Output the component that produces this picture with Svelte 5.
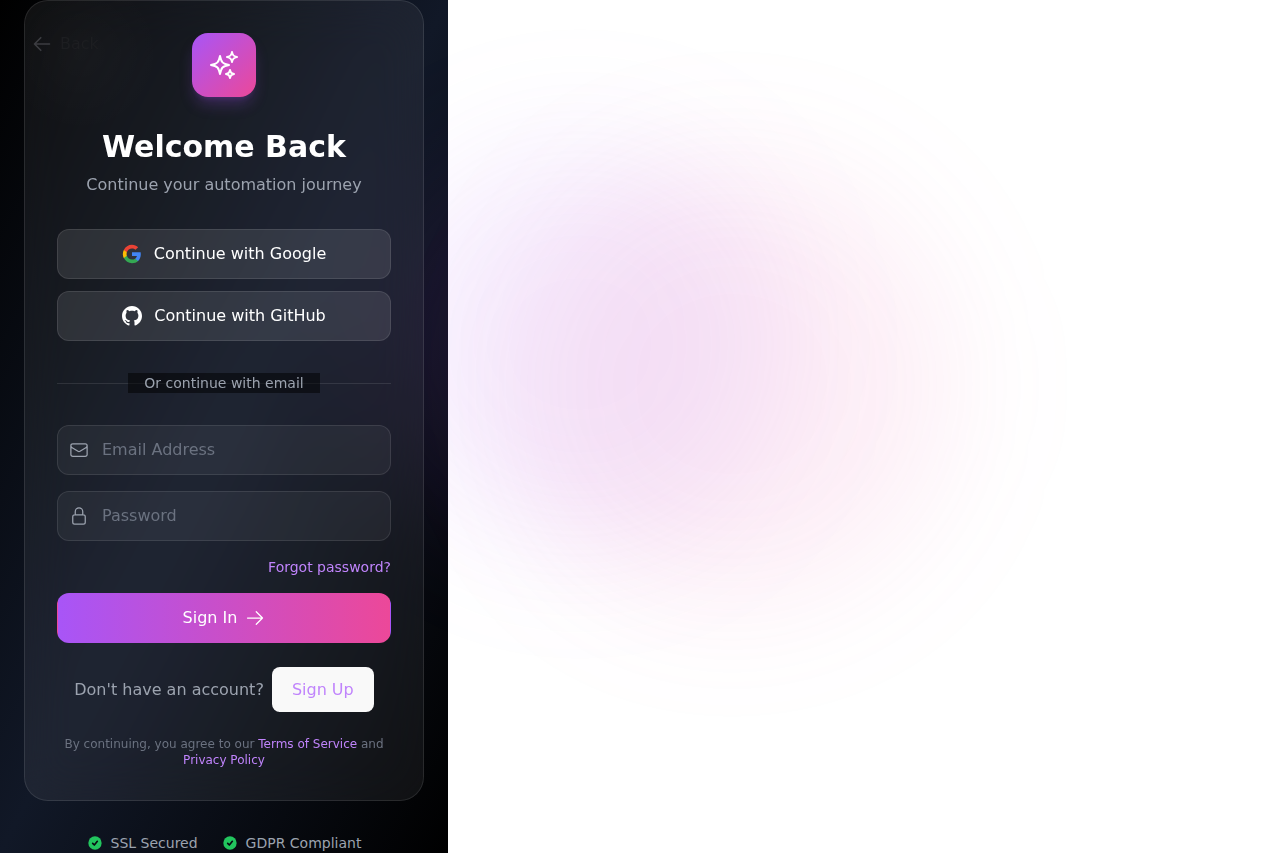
<script lang="ts">
  let email = $state('');
  let password = $state('');
  const badges = ['SSL Secured', 'GDPR Compliant'];
</script>

<div class="page">
  <div class="glows" aria-hidden="true">
    <span class="glow purple"></span>
    <span class="glow pink"></span>
  </div>

  <main class="panel">
    <button class="back" type="button">
      <svg viewBox="0 0 24 24" class="icon outline bold" aria-hidden="true"><path d="M10.5 19.5L3 12m0 0l7.5-7.5M3 12h18" /></svg>
      <span>Back</span>
    </button>

    <section class="card">
      <header>
        <div class="logo">
          <svg viewBox="0 0 24 24" class="outline" aria-hidden="true">
            <path d="M9.813 15.904L9 18.75l-.813-2.846a4.5 4.5 0 00-3.09-3.09L2.25 12l2.846-.813a4.5 4.5 0 003.09-3.09L9 5.25l.813 2.846a4.5 4.5 0 003.09 3.09L15.75 12l-2.846.813a4.5 4.5 0 00-3.09 3.09zM18.259 8.715L18 9.75l-.259-1.035a3.375 3.375 0 00-2.455-2.456L14.25 6l1.036-.259a3.375 3.375 0 002.455-2.456L18 2.25l.259 1.035a3.375 3.375 0 002.456 2.456L21.75 6l-1.035.259a3.375 3.375 0 00-2.456 2.456zM16.894 20.567L16.5 21.75l-.394-1.183a2.25 2.25 0 00-1.423-1.423L13.5 18.75l1.183-.394a2.25 2.25 0 001.423-1.423l.394-1.183.394 1.183a2.25 2.25 0 001.423 1.423l1.183.394-1.183.394a2.25 2.25 0 00-1.423 1.423z" />
          </svg>
        </div>
        <h1>Welcome Back</h1>
        <p>Continue your automation journey</p>
      </header>

      <div class="social">
        <button class="provider" type="button">
          <svg viewBox="0 0 24 24" class="icon" aria-hidden="true">
            <path fill="#4285F4" d="M22.56 12.25c0-.78-.07-1.53-.2-2.25H12v4.26h5.92c-.26 1.37-1.04 2.53-2.21 3.31v2.77h3.57c2.08-1.92 3.28-4.74 3.28-8.09z" />
            <path fill="#34A853" d="M12 23c2.97 0 5.46-.98 7.28-2.66l-3.57-2.77c-.98.66-2.23 1.06-3.71 1.06-2.86 0-5.29-1.93-6.16-4.53H2.18v2.84C3.99 20.53 7.7 23 12 23z" />
            <path fill="#FBBC05" d="M5.84 14.09c-.22-.66-.35-1.36-.35-2.09s.13-1.43.35-2.09V7.07H2.18C1.43 8.55 1 10.22 1 12s.43 3.45 1.18 4.93l2.85-2.22.81-.62z" />
            <path fill="#EA4335" d="M12 5.38c1.62 0 3.06.56 4.21 1.64l3.15-3.15C17.45 2.09 14.97 1 12 1 7.7 1 3.99 3.47 2.18 7.07l3.66 2.84c.87-2.6 3.3-4.53 6.16-4.53z" />
          </svg>
          Continue with Google
        </button>
        <button class="provider" type="button">
          <svg viewBox="0 0 24 24" class="icon" fill="currentColor" aria-hidden="true">
            <path d="M12 0c-6.626 0-12 5.373-12 12 0 5.302 3.438 9.8 8.207 11.387.599.111.793-.261.793-.577v-2.234c-3.338.726-4.033-1.416-4.033-1.416-.546-1.387-1.333-1.756-1.333-1.756-1.089-.745.083-.729.083-.729 1.205.084 1.839 1.237 1.839 1.237 1.07 1.834 2.807 1.304 3.492.997.107-.775.418-1.305.762-1.604-2.665-.305-5.467-1.334-5.467-5.931 0-1.311.469-2.381 1.236-3.221-.124-.303-.535-1.524.117-3.176 0 0 1.008-.322 3.301 1.23.957-.266 1.983-.399 3.003-.404 1.02.005 2.047.138 3.006.404 2.291-1.552 3.297-1.23 3.297-1.23.653 1.653.242 2.874.118 3.176.77.84 1.235 1.911 1.235 3.221 0 4.609-2.807 5.624-5.479 5.921.43.372.823 1.102.823 2.222v3.293c0 .319.192.694.801.576 4.765-1.589 8.199-6.086 8.199-11.386 0-6.627-5.373-12-12-12z" />
          </svg>
          Continue with GitHub
        </button>
      </div>

      <div class="divider"><span>Or continue with email</span></div>

      <form onsubmit={(e) => e.preventDefault()}>
        <label class="field">
          <svg viewBox="0 0 24 24" class="icon outline" aria-hidden="true">
            <path d="M21.75 6.75v10.5a2.25 2.25 0 01-2.25 2.25h-15a2.25 2.25 0 01-2.25-2.25V6.75m19.5 0A2.25 2.25 0 0019.5 4.5h-15a2.25 2.25 0 00-2.25 2.25m19.5 0v.243a2.25 2.25 0 01-1.07 1.916l-7.5 4.615a2.25 2.25 0 01-2.36 0L3.32 8.91a2.25 2.25 0 01-1.07-1.916V6.75" />
          </svg>
          <input type="email" placeholder="Email Address" aria-label="Email Address" bind:value={email} />
        </label>
        <label class="field">
          <svg viewBox="0 0 24 24" class="icon outline" aria-hidden="true">
            <path d="M16.5 10.5V6.75a4.5 4.5 0 10-9 0v3.75m-.75 11.25h10.5a2.25 2.25 0 002.25-2.25v-6.75a2.25 2.25 0 00-2.25-2.25H6.75a2.25 2.25 0 00-2.25 2.25v6.75a2.25 2.25 0 002.25 2.25z" />
          </svg>
          <input type="password" placeholder="Password" aria-label="Password" bind:value={password} />
        </label>
        <a class="forgot" href="#forgot">Forgot password?</a>
        <button class="submit" type="submit">
          Sign In
          <svg viewBox="0 0 24 24" class="icon outline" aria-hidden="true"><path d="M13.5 4.5L21 12m0 0l-7.5 7.5M21 12H3" /></svg>
        </button>
      </form>

      <div class="signup">
        <span>Don't have an account?</span>
        <button type="button">Sign Up</button>
      </div>

      <p class="terms">
        By continuing, you agree to our <a href="#terms">Terms of Service</a> and
        <a href="#privacy">Privacy Policy</a>
      </p>
    </section>

    <footer>
      {#each badges as badge}
        <span class="badge">
          <svg viewBox="0 0 24 24" aria-hidden="true">
            <circle cx="12" cy="12" r="10" fill="#22c55e" />
            <path d="M8.5 12.5l2.5 2.5 4.5-5.5" fill="none" stroke="#080b12" stroke-width="2.5" stroke-linecap="round" stroke-linejoin="round" />
          </svg>
          {badge}
        </span>
      {/each}
    </footer>
  </main>
</div>

<style>
  :global(body) {
    margin: 0;
    background: #fff;
  }

  .page,
  .page * {
    box-sizing: border-box;
  }

  .page {
    position: relative;
    isolation: isolate;
    min-height: 100vh;
    overflow: hidden;
    font-family: 'DejaVu Sans', sans-serif;
    font-size: 16px;
    line-height: 24px;
    color: #9ca3af;
  }

  .page::before {
    content: '';
    position: absolute;
    inset: 0 auto 0 0;
    z-index: -2;
    width: 100%;
    max-width: 448px;
    background: linear-gradient(to bottom right, #000, #111827, #000);
  }

  .glows {
    position: absolute;
    inset: 0;
    z-index: -1;
    overflow: hidden;
    pointer-events: none;
  }

  .glow {
    position: absolute;
    border-radius: 50%;
    filter: blur(64px);
  }

  .purple {
    top: 144px;
    left: 380px;
    width: 400px;
    height: 400px;
    background: rgba(168, 85, 247, 0.1);
  }

  .pink {
    top: 164px;
    left: 512px;
    width: 440px;
    height: 440px;
    background: rgba(236, 72, 153, 0.09);
  }

  .panel {
    position: relative;
    display: flex;
    flex-direction: column;
    width: 100%;
    max-width: 448px;
    padding: 0 24px;
  }

  button,
  input {
    font: inherit;
  }

  button {
    cursor: pointer;
  }

  a {
    color: #c084fc;
    text-decoration: none;
  }

  svg {
    display: block;
    flex: none;
  }

  .icon {
    width: 20px;
    height: 20px;
  }

  .outline {
    fill: none;
    stroke: currentColor;
    stroke-width: 1.5;
    stroke-linecap: round;
    stroke-linejoin: round;
  }

  .bold {
    stroke-width: 2;
  }

  .back {
    position: absolute;
    top: 32px;
    left: 32px;
    z-index: 1;
    display: flex;
    align-items: center;
    gap: 8px;
    padding: 0;
    border: 0;
    background: none;
    color: #1d1e21;
  }

  .back svg {
    color: #3c3d42;
  }

  .card {
    padding: 32px;
    border: 1px solid rgba(255, 255, 255, 0.1);
    border-radius: 24px;
    background: radial-gradient(circle at 56px 52px, rgba(255, 255, 255, 0.02), transparent 80px), rgba(255, 255, 255, 0.06);
    backdrop-filter: blur(24px);
  }

  header {
    display: flex;
    flex-direction: column;
    align-items: center;
    text-align: center;
  }

  .logo {
    display: grid;
    place-items: center;
    width: 64px;
    height: 64px;
    margin-bottom: 32px;
    border-radius: 16px;
    background: linear-gradient(to bottom right, #a855f7, #ec4899);
    box-shadow: 0 10px 15px -3px rgba(168, 85, 247, 0.25), 0 4px 6px -4px rgba(168, 85, 247, 0.25);
    color: #fff;
  }

  .logo svg {
    width: 32px;
    height: 32px;
  }

  h1 {
    margin: 0 0 8px;
    font-size: 30px;
    line-height: 36px;
    font-weight: 700;
    color: #fff;
  }

  p {
    margin: 0;
  }

  .social {
    display: grid;
    gap: 12px;
    margin-top: 32px;
  }

  .provider,
  .submit {
    display: flex;
    align-items: center;
    justify-content: center;
    width: 100%;
    padding: 12px 16px;
    border-radius: 12px;
    color: #fff;
  }

  .provider {
    gap: 12px;
    border: 1px solid rgba(255, 255, 255, 0.1);
    background: rgba(255, 255, 255, 0.1);
  }

  .divider {
    display: grid;
    align-items: center;
    justify-items: center;
    margin: 32px 0;
    font-size: 14px;
    line-height: 20px;
  }

  .divider::before {
    content: '';
    grid-area: 1 / 1;
    width: 100%;
    border-top: 1px solid rgba(255, 255, 255, 0.1);
  }

  .divider span {
    z-index: 1;
    grid-area: 1 / 1;
    padding: 0 16px;
    background: rgba(0, 0, 0, 0.5);
  }

  form {
    display: grid;
    gap: 16px;
  }

  .field {
    display: flex;
    align-items: center;
    gap: 13px;
    padding-left: 11px;
    border: 1px solid rgba(255, 255, 255, 0.1);
    border-radius: 12px;
    background: rgba(255, 255, 255, 0.05);
  }

  .field input {
    flex: 1;
    min-width: 0;
    height: 48px;
    padding: 0 16px 2px 0;
    border: 0;
    outline: 0;
    background: none;
    color: #fff;
  }

  .field input::placeholder {
    color: #6b7280;
    opacity: 1;
  }

  .forgot {
    justify-self: end;
    font-size: 14px;
    line-height: 20px;
  }

  .submit {
    gap: 8px;
    border: 1px solid transparent;
    background: linear-gradient(to right, #a855f7, #ec4899);
  }

  .signup {
    display: flex;
    align-items: center;
    justify-content: center;
    gap: 8px;
    margin-top: 24px;
  }

  .signup button {
    height: 45px;
    padding: 0 19px;
    border: 1px solid transparent;
    border-radius: 8px;
    background: #f9f9f9;
    color: #c084fc;
  }

  .terms {
    margin-top: 24px;
    font-size: 12px;
    line-height: 16px;
    text-align: center;
    color: #6b7280;
  }

  footer {
    display: flex;
    justify-content: center;
    gap: 24px;
    margin-top: 32px;
    font-size: 14px;
    line-height: 20px;
  }

  .badge {
    display: flex;
    align-items: center;
    gap: 8px;
  }

  .badge svg {
    width: 16px;
    height: 16px;
  }
</style>
